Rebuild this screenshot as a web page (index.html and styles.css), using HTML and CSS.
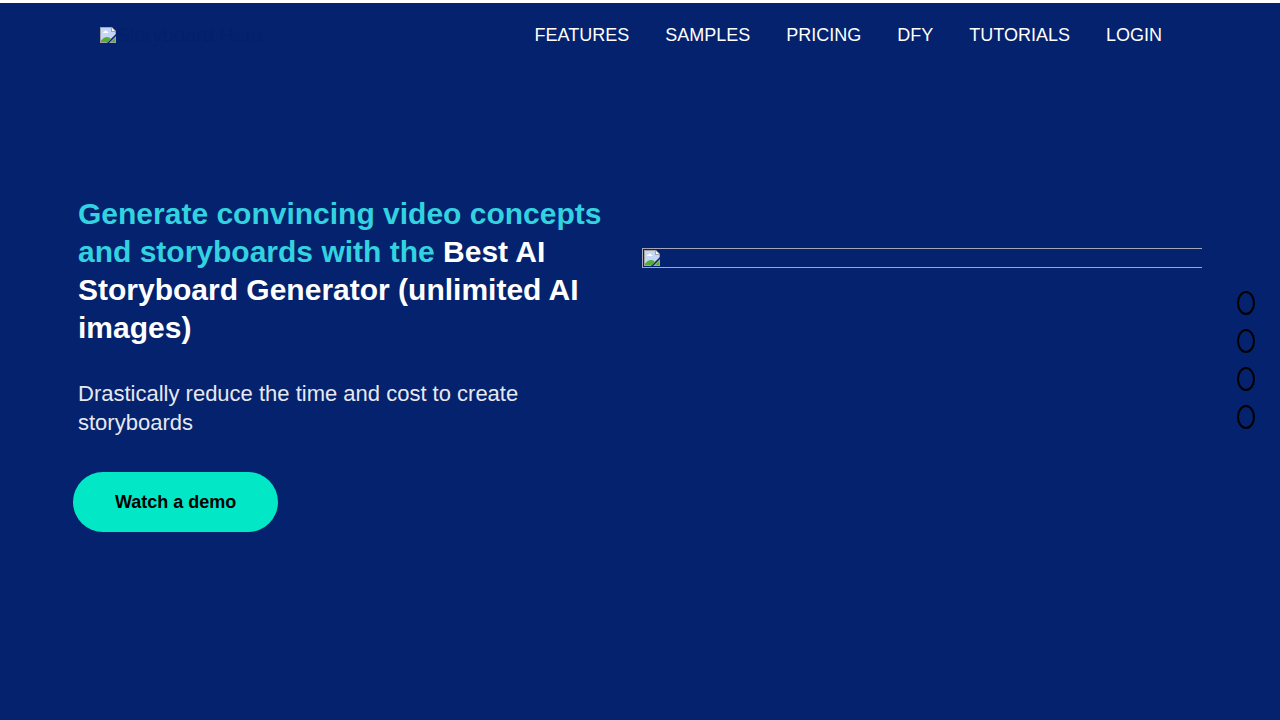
FILE: index.html
```html
<!DOCTYPE html>
<html lang="en">
<head>
<meta charset="utf-8">
<title>Storyboard Hero</title>
<link rel="stylesheet" href="styles.css">
</head>
<body>
<svg width="0" height="0" class="defs" aria-hidden="true">
  <symbol id="missing" viewBox="0 0 16 16">
    <path d="M0 0h12l4 4v3L7 16H0z" fill="#a3a3a3"/>
    <path d="M1 1h10v4h4v2.500L7.500 15H1z" fill="#c5d7f7"/>
    <path d="M12 1l3 3h-3z" fill="#fff"/>
    <path d="M3 6q0-1.500 1.500-1.500Q5 3 6.300 3.500 7.500 4 7.500 5 8.500 5 8.500 6z" fill="#fff"/>
    <path d="M1 15v-1.500Q4 9.500 7 10q3 .2 4 2L8 15z" fill="#55ad38"/>
    <path d="M16 9v7H9z" fill="#a3a3a3"/>
    <path d="M15 11.500V15h-3.500z" fill="#55ad38"/>
  </symbol>
</svg>
<header class="header">
  <a class="logo" href="#"><svg class="icon" aria-hidden="true"><use href="#missing"/></svg><span>Storyboard Hero</span></a>
  <nav class="nav">
    <a href="#">FEATURES</a>
    <a href="#">SAMPLES</a>
    <a href="#">PRICING</a>
    <a href="#">DFY</a>
    <a href="#">TUTORIALS</a>
    <a href="#">LOGIN</a>
  </nav>
</header>
<main class="hero">
  <section class="copy">
    <h1 class="title"><span class="accent">Generate convincing video concepts and storyboards with the</span> Best AI Storyboard Generator (unlimited AI images)</h1>
    <p class="lead">Drastically reduce the time and cost to create storyboards</p>
    <button class="cta" type="button">Watch a demo</button>
  </section>
  <div class="media"><svg class="icon" aria-hidden="true"><use href="#missing"/></svg></div>
</main>
<nav class="dots" aria-label="Page sections">
  <a class="dot" href="#" aria-label="Section 1"></a>
  <a class="dot" href="#" aria-label="Section 2"></a>
  <a class="dot" href="#" aria-label="Section 3"></a>
  <a class="dot" href="#" aria-label="Section 4"></a>
</nav>
</body>
</html>
```
FILE: styles.css
```css
* {
  box-sizing: border-box;
}

body {
  margin: 0;
  min-height: 100vh;
  display: flex;
  flex-direction: column;
  border-top: 3px solid #fff;
  color: #fff;
  font-family: "Liberation Sans", Arial, sans-serif;
}

html {
  background: #04226d;
}

a {
  color: inherit;
  text-decoration: none;
}

.defs {
  position: absolute;
}

.icon {
  display: block;
  flex: none;
  width: 16px;
  height: 16px;
}

.header {
  display: flex;
  justify-content: space-between;
  align-items: center;
  height: 64px;
  padding: 0 118px 0 100px;
}

.logo {
  display: flex;
  align-items: center;
  color: #04206a;
  font-size: 20px;
}

.nav {
  display: flex;
  gap: 36px;
  font-size: 18px;
}

.hero {
  flex: 1;
  display: grid;
  grid-template-columns: 1fr 1fr;
  gap: 36px;
  align-items: start;
  padding: 128px 78px 0;
}

.title {
  margin: 0;
  font-size: 30px;
  line-height: 38px;
}

.accent {
  color: #33d2e0;
}

.lead {
  margin: 32px 0 35px;
  color: #e6e9f0;
  font-size: 22px;
  line-height: 29px;
}

.cta {
  margin-left: -5px;
  height: 60px;
  padding: 0 42px;
  border: 0;
  border-radius: 30px;
  background: #02e8c6;
  color: #000;
  font: bold 18px "Liberation Sans", Arial, sans-serif;
}

.media {
  margin: 53px 0 0 -16px;
  padding: 1px;
  border: 1px solid #a3a8b8;
  border-right: 0;
}

.dots {
  position: fixed;
  top: 50%;
  right: 25px;
  display: grid;
  gap: 14px;
  transform: translateY(-50%);
}

.dot {
  width: 18px;
  height: 24px;
  border: 2px solid #000;
  border-radius: 50%;
}
```
